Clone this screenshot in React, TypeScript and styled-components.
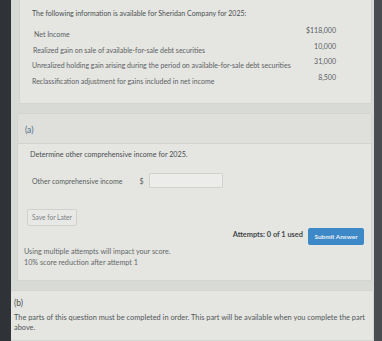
import React from "react";
import styled, {createGlobalStyle} from "styled-components";

const GlobalStyle = createGlobalStyle`
  html, body {
    margin: 0;
    padding: 0;
    background: #3b3f43;
    overflow: hidden;
  }
  body {
    font-family: Lato, "Open Sans", sans-serif;
    color: #555a5c;
  }
`

const Frame = styled.div`
  width: 382px;
  height: 341px;
  background: linear-gradient(90deg, #2f3337 0%, #4a4e52 100%);
  display: flex;
  overflow: hidden;
`

const Page = styled.div`
  flex: 1;
  margin: 0 8px 0 11px;
  background: #d8dad6;
  padding: 0 2px 0 6px;
  display: flex;
  flex-direction: column;
  gap: 9px;
  overflow: hidden;
`

const Card = styled.div`
  background: #e5e6e2;
  border: 1px solid #d3d5d1;
  border-radius: 2px;
`

const InfoCard = styled(Card)`
  margin-top: -4px;
  padding: 12px 10px 15px 12px;
  margin-left: 2px;
`

const Lead = styled.div`
  font-size: 7px;
  color: #4a4f52;
  margin-bottom: 9px;
`

const Row = styled.div`
  display: flex;
  justify-content: space-between;
  align-items: flex-start;
  height: 15.5px;
  font-size: 7px;
  color: #5b6062;
`

const Label = styled.span<{ $indent: number }>`
  padding-top: 4px;
  padding-left: ${({$indent}) => $indent}px;
`

const Amount = styled.span`
  width: 40px;
  text-align: right;
  margin-right: 25px;
`

const PartHeader = styled.div`
  background: #dfe0dc;
  border-bottom: 1px solid #d2d4d0;
  height: 30px;
  display: flex;
  align-items: center;
  padding: 2px 0 0 7px;
  box-sizing: border-box;
  font-size: 8.5px;
  color: #4d6a86;
`

const PartBody = styled.div`
  padding: 6px 7px 12px 12px;
`

const Question = styled.div`
  font-size: 7.2px;
  color: #4a4f52;
  margin-bottom: 14px;
`

const AnswerRow = styled.div`
  display: flex;
  align-items: center;
  font-size: 7px;
  color: #585d60;
  margin-bottom: 16px;
  padding-left: 2px;
`

const Dollar = styled.span`
  margin-left: 17px;
  margin-right: 5px;
`

const Input = styled.div`
  width: 72px;
  height: 13px;
  background: #ececea;
  border: 1px solid #d0d2ce;
  border-radius: 1px;
`

const SaveButton = styled.button`
  font-family: inherit;
  font-size: 6.6px;
  color: #7b8083;
  background: #e8e9e6;
  border: 1px solid #cfd1cd;
  border-radius: 2px;
  width: 50px;
  height: 17px;
  padding: 0;
  margin-left: -3px;
`

const SubmitRow = styled.div`
  display: flex;
  justify-content: flex-end;
  align-items: center;
  gap: 5px;
  margin-top: 2px;
`

const Attempts = styled.span`
  font-size: 7.4px;
  font-weight: 700;
  color: #43484b;
  margin-top: -3px;
`

const SubmitButton = styled.button`
  font-family: inherit;
  font-size: 6.4px;
  font-weight: 700;
  color: #e8f1f8;
  background: #3d88c6;
  border: none;
  border-radius: 2px;
  width: 56px;
  height: 17px;
  padding: 0;
`

const Note = styled.div`
  font-size: 7.2px;
  line-height: 11px;
  color: #64696b;
  margin-left: -6px;
  margin-top: 1px;
`

const PartB = styled(Card)`
  padding: 7px 1px 0 6px;
  flex: 1;
  margin-left: -10px;
  margin-right: -2px;
`

const PartBTitle = styled.div`
  font-size: 8.5px;
  color: #4d5356;
  margin-bottom: 5px;
`

const PartBText = styled.div`
  font-size: 7.4px;
  line-height: 10px;
  color: #51575a;
`

const rows = [
    {label: "Net Income", amount: "$118,000", indent: 2},
    {label: "Realized gain on sale of available-for-sale debt securities", amount: "10,000", indent: 1},
    {label: "Unrealized holding gain arising during the period on available-for-sale debt securities", amount: "31,000", indent: 0},
    {label: "Reclassification adjustment for gains included in net income", amount: "8,500", indent: 0},
]

export default function App() {
    return (
        <Frame>
            <GlobalStyle/>
            <Page>
                <InfoCard>
                    <Lead>The following information is available for Sheridan Company for 2025:</Lead>
                    {rows.map((row) => (
                        <Row key={row.label}>
                            <Label $indent={row.indent}>{row.label}</Label>
                            <Amount>{row.amount}</Amount>
                        </Row>
                    ))}
                </InfoCard>
                <Card>
                    <PartHeader>(a)</PartHeader>
                    <PartBody>
                        <Question>Determine other comprehensive income for 2025.</Question>
                        <AnswerRow>
                            Other comprehensive income
                            <Dollar>$</Dollar>
                            <Input/>
                        </AnswerRow>
                        <SaveButton>Save for Later</SaveButton>
                        <SubmitRow>
                            <Attempts>Attempts: 0 of 1 used</Attempts>
                            <SubmitButton>Submit Answer</SubmitButton>
                        </SubmitRow>
                        <Note>
                            Using multiple attempts will impact your score.<br/>
                            10% score reduction after attempt 1
                        </Note>
                    </PartBody>
                </Card>
                <PartB>
                    <PartBTitle>(b)</PartBTitle>
                    <PartBText>
                        The parts of this question must be completed in order. This part will be available when you
                        complete the part above.
                    </PartBText>
                </PartB>
            </Page>
        </Frame>
    )
}
